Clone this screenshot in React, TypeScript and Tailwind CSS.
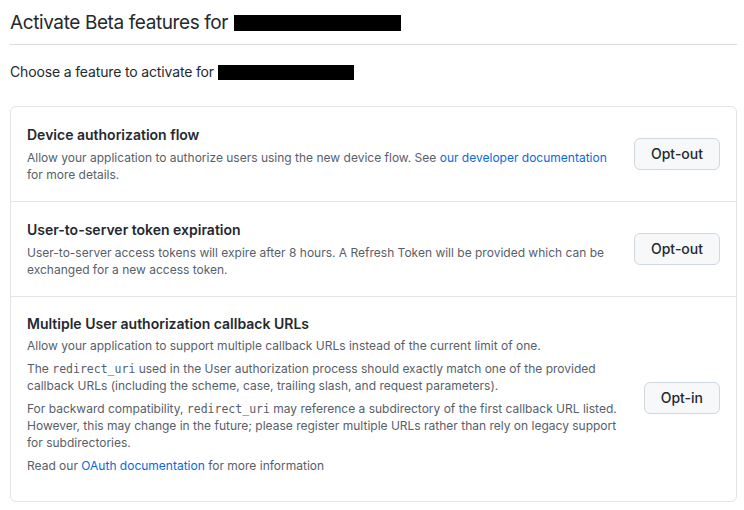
import React from 'react';

const Button: React.FC<{ label: string }> = ({ label }) => (
  <button className="h-[32px] px-4 rounded-md border border-[#d0d7de] bg-[#f6f8fa] text-[14px] font-medium text-[#24292f] leading-none shrink-0">
    {label}
  </button>
);

const Code: React.FC<{ children: React.ReactNode }> = ({ children }) => (
  <code className="font-['DejaVu_Sans_Mono',monospace] text-[11.5px] leading-none text-[#57606a]">{children}</code>
);

const App: React.FC = () => {
  return (
    <div className="w-[744px] h-[510px] bg-white pl-[10px] pr-[7px] font-['Inter',sans-serif] text-[#24292f] overflow-hidden">
      <div className="pt-[8px] pb-[6px] border-b border-[#d8dee4] flex items-center">
        <h1 className="text-[19px] font-normal leading-[30px] tracking-[-0.4px]">Activate Beta features for</h1>
        <span className="ml-[6px] w-[167px] h-[16px] bg-black inline-block"></span>
      </div>

      <div className="mt-[17px] flex items-center text-[14px] leading-[20px] tracking-[-0.15px]">
        <span>Choose a feature to activate for</span>
        <span className="ml-[4px] w-[136px] h-[15px] bg-black inline-block"></span>
      </div>

      <div className="mt-[24px] border border-[#e1e4e8] rounded-md">
        <div className="flex items-center px-4 pt-[17px] pb-[18px] border-b border-[#e1e4e8]">
          <div className="flex-1 pr-6">
            <h3 className="text-[14px] font-semibold leading-[21px]">Device authorization flow</h3>
            <p className="mt-[4px] text-[12px] leading-[17px] text-[#57606a]">
              Allow your application to authorize users using the new device flow. See{' '}
              <a className="text-[#0969da]">our developer documentation</a> for more details.
            </p>
          </div>
          <Button label="Opt-out" />
        </div>

        <div className="flex items-center px-4 pt-[17px] pb-[18px] border-b border-[#e1e4e8]">
          <div className="flex-1 pr-6">
            <h3 className="text-[14px] font-semibold leading-[21px]">User-to-server token expiration</h3>
            <p className="mt-[4px] text-[12px] leading-[17px] text-[#57606a]">
              User-to-server access tokens will expire after 8 hours. A Refresh Token will be provided which can be
              exchanged for a new access token.
            </p>
          </div>
          <Button label="Opt-out" />
        </div>

        <div className="flex items-center px-4 pt-[16px] pb-[18px]">
          <div className="flex-1 pr-6">
            <h3 className="text-[14px] font-semibold leading-[21px]">Multiple User authorization callback URLs</h3>
            <div className="mt-[3px] mb-[9px] text-[12px] leading-[17px] text-[#57606a] flex flex-col gap-[6px]">
              <p>Allow your application to support multiple callback URLs instead of the current limit of one.</p>
              <p>
                The <Code>redirect_uri</Code> used in the User authorization process should exactly match one of the provided
                callback URLs (including the scheme, case, trailing slash, and request parameters).
              </p>
              <p>
                For backward compatibility, <Code>redirect_uri</Code> may reference a subdirectory of the first callback URL listed.
                However, this may change in the future; please register multiple URLs rather than rely on legacy support
                for subdirectories.
              </p>
              <p>
                Read our <a className="text-[#0969da]">OAuth documentation</a> for more information
              </p>
            </div>
          </div>
          <Button label="Opt-in" />
        </div>
      </div>
    </div>
  );
};

export default App;
